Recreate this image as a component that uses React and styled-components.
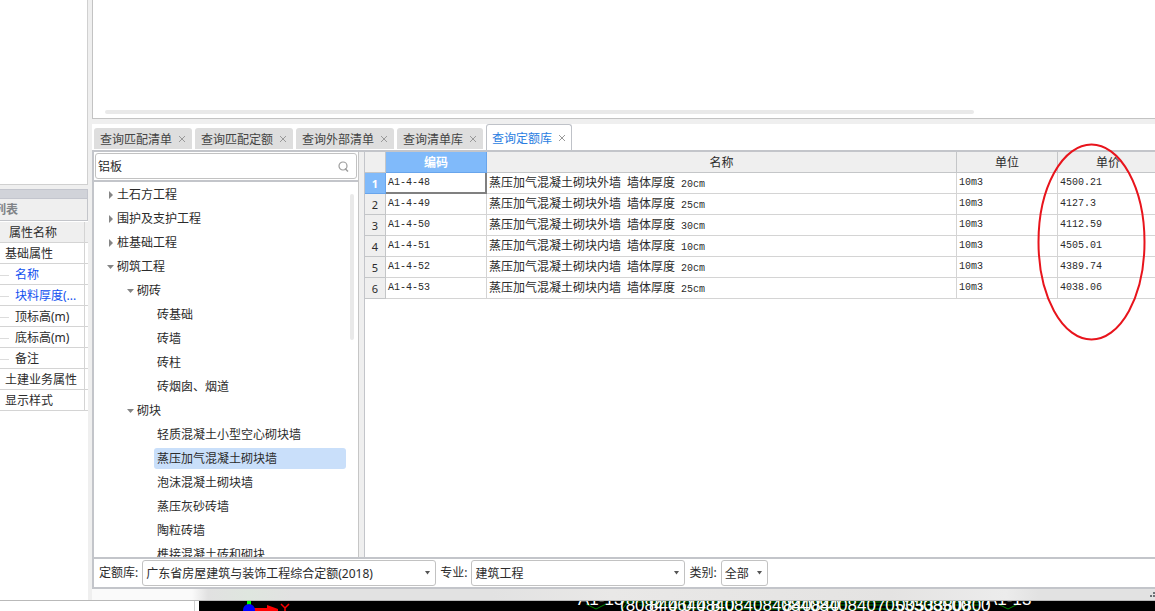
import { Fragment, useState } from "react";
import styled, { createGlobalStyle, css } from "styled-components";

const GlobalStyle = createGlobalStyle`
  * {
    box-sizing: border-box;
  }
  body {
    margin: 0;
    overflow: hidden;
    color: #2b2b2b;
    background: #fff;
    font-size: 12px;
  }
  body, button, input, select {
    font-family: "Noto Sans CJK SC", sans-serif;
  }
`;

const line = "#c3c5ca";
const softLine = "#d4d4d4";

const Page = styled.div`
  display: flex;
  flex-direction: column;
  height: 100vh;
`;

const Workspace = styled.div`
  display: flex;
  flex: 1;
  min-height: 0;
  background: #efefef;
  border-bottom: 1px solid #b9b9b9;
`;

/* left side */

const Sidebar = styled.aside`
  display: flex;
  flex-direction: column;
  width: 88px;
  margin-right: 4px;
`;

const ComponentPane = styled.div`
  height: 185px;
  margin-bottom: 4px;
  background: #fff;
  border-right: 1px solid #d0d0d0;
  border-bottom: 1px solid #d0d0d0;
`;

const PaneGrip = styled.div`
  height: 10px;
  background: #d1d3d9;
  border: 1px solid #c3c5cd;
  border-width: 1px 1px 1px 0;
`;

const PaneTitle = styled.h2`
  height: 22px;
  margin: 0;
  border-right: 1px solid ${line};
  border-bottom: 1px solid ${line};
  color: #808387;
  font-size: 12px;
  line-height: 20px;
  text-indent: -6px;
  white-space: nowrap;
`;

const PropertyPane = styled.div`
  flex: 1;
  padding-top: 1px;
  background: #fff;
`;

const PropertyTable = styled.table`
  width: 100%;
  table-layout: fixed;
  border-collapse: separate;
  border-spacing: 0;

  th,
  td {
    height: 21px;
    padding: 2px 0 0;
    border-bottom: 1px solid ${softLine};
    font-weight: normal;
    line-height: 18px;
    text-align: left;
    white-space: nowrap;
  }
  th {
    padding-top: 0;
    background: #efefef;
  }
  th:first-child,
  td:first-child {
    width: 85px;
    border-right: 1px solid ${softLine};
  }
  th:first-child {
    padding-left: 9px;
  }
`;

const PropertyName = styled.div`
  display: flex;
  align-items: center;
  gap: 6px;
  padding-left: ${(props) => (props.$child ? 0 : 5)}px;
  color: ${(props) => (props.$editable ? "#1150f0" : "inherit")};
  font-family: "Noto Sans", "Noto Sans CJK SC", sans-serif;

  ${(props) =>
    props.$child &&
    css`
      &::before {
        content: "";
        width: 9px;
        border-top: 1px solid #dcdcdc;
      }
    `}
`;

/* right side */

const Main = styled.main`
  display: flex;
  flex: 1;
  flex-direction: column;
  min-width: 0;
`;

const UpperPane = styled.div`
  display: flex;
  align-items: flex-end;
  height: 119px;
  margin-bottom: 5px;
  padding: 0 181px 4px 12px;
  background: #fff;
  border-left: 1px solid #c3c3c3;
  border-bottom: 1px solid #c3c3c3;
`;

const HorizontalThumb = styled.div`
  flex: 1;
  height: 4px;
  border-radius: 2px;
  background: #e9e9e9;
`;

const TabBar = styled.div`
  display: flex;
  align-items: flex-end;
  gap: 3px;
  height: 26px;
  padding-left: 2px;
  background: #fff;
`;

const Tab = styled.button`
  display: flex;
  align-items: center;
  gap: 7px;
  height: 21px;
  margin-bottom: 1px;
  padding: 0 7px 0 6px;
  border: 0;
  border-radius: 3px 3px 0 0;
  background: #dedede;
  color: #444;
  font-size: 12px;
  line-height: 20px;
  white-space: nowrap;

  svg {
    width: 6px;
    height: 6px;
    stroke: #999;
  }

  ${(props) =>
    props.$active &&
    css`
      height: 26px;
      margin-bottom: 0;
      padding: 0 6px 0 5px;
      border: 1px solid #bfc2c8;
      border-bottom: 0;
      background: #fff;
      color: #2a7de1;
    `}
`;

const Dock = styled.div`
  display: flex;
  flex: 1;
  flex-direction: column;
  min-height: 0;
  background: #fff;
  border-top: 2px solid ${line};
  border-left: 2px solid ${line};
  border-bottom: 2px solid ${line};
`;

const DockBody = styled.div`
  display: flex;
  flex: 1;
  gap: 5px;
  min-height: 0;
  background: #efefef;
`;

const TreePanel = styled.section`
  display: flex;
  flex-direction: column;
  width: 265px;
  background: #fff;
  border-right: 1px solid #c6c6c6;
`;

const SearchBox = styled.label`
  display: flex;
  align-items: center;
  height: 26px;
  margin: 1px;
  padding: 0 7px 0 2px;
  border: 1px solid #c2c2c2;
  border-radius: 3px;

  input {
    flex: 1;
    min-width: 0;
    padding: 0;
    border: 0;
    outline: 0;
    color: inherit;
    font-size: 12px;
    line-height: 20px;
  }
  svg {
    width: 11px;
    height: 11px;
    stroke: #9d9d9d;
  }
`;

const TreeScroll = styled.div`
  display: flex;
  flex: 1;
  min-height: 0;
  overflow: hidden;
  border-top: 2px solid ${line};
`;

const TreeList = styled.ul`
  flex: 1;
  margin: 0;
  padding: 0;
  list-style: none;
`;

const VerticalThumb = styled.div`
  width: 4px;
  height: 146px;
  margin: 12px 4px;
  border-radius: 2px;
  background: #e9e9e9;
`;

const TreeRow = styled.li`
  display: flex;
  align-items: center;
  height: 24px;
  padding-left: ${(props) => 11 + props.$level * 20}px;

  svg {
    flex: none;
    width: 9px;
    height: 9px;
    fill: #858585;
  }
`;

const TreeSpacer = styled.span`
  width: 9px;
`;

const TreeLabel = styled.button`
  flex: 1;
  height: 21px;
  padding: 0 0 0 3px;
  border: 0;
  border-radius: 3px;
  background: ${(props) => (props.$selected ? "#c9dffa" : "transparent")};
  color: inherit;
  font-size: 12px;
  line-height: 20px;
  text-align: left;
  white-space: nowrap;
`;

const GridPanel = styled.section`
  position: relative;
  flex: 1;
  min-width: 0;
  background: #fff;
  border-left: 1px solid ${line};
`;

const GridScroll = styled.div`
  height: 100%;
  overflow: hidden;
`;

const Grid = styled.table`
  width: 100%;
  min-width: 794px;
  table-layout: fixed;
  border-collapse: separate;
  border-spacing: 0;

  th,
  td {
    height: 21px;
    padding: 0;
    border-right: 1px solid ${softLine};
    border-bottom: 1px solid ${softLine};
    white-space: nowrap;
  }
  td {
    padding-left: 2px;
    font-family: "Liberation Mono", "Noto Sans CJK SC", monospace;
    font-size: 10px;
    line-height: 16px;
  }
`;

const HeadCell = styled.th`
  width: ${(props) => (props.$width ? `${props.$width}px` : "auto")};
  background: ${(props) => (props.$active ? "#80bafa" : "#efefef")};
  color: ${(props) => (props.$active ? "#fff" : "inherit")};
  font-weight: ${(props) => (props.$active ? "bold" : "normal")};
  line-height: 20px;

  ${Grid} & {
    border-color: ${(props) => (props.$active ? "#68a5ec" : "#c4c6c8")};
  }
`;

const RowHead = styled.th`
  background: ${(props) => (props.$active ? "#80bafa" : "#efefef")};
  color: ${(props) => (props.$active ? "#fff" : "inherit")};
  font-family: "Noto Sans", sans-serif;
  font-size: 11px;
  font-weight: ${(props) => (props.$active ? "bold" : "normal")};
  line-height: 18px;

  ${Grid} & {
    padding-top: 2px;
    border-color: ${(props) => (props.$active ? "#68a5ec" : "#c4c6c8")};
  }
`;

const CodeCell = styled.td`
  ${(props) =>
    props.$active &&
    css`
      box-shadow: inset -1px -1px 0 #808080;
      ${Grid} & {
        border-color: #808080;
      }
    `}
`;

const Hanzi = styled.span`
  font-family: "Noto Sans CJK SC", sans-serif;
  font-size: 12px;
`;

const PriceMark = styled.svg`
  position: absolute;
  top: -9px;
  right: 9px;
  width: 109px;
  height: 198px;
  fill: none;
  stroke: #e8141c;
  stroke-width: 2;
  pointer-events: none;
`;

const FilterBar = styled.form`
  display: flex;
  align-items: center;
  gap: 4px;
  height: 30px;
  padding-left: 5px;
  border-top: 2px solid ${line};
  font-family: "Noto Sans", "Noto Sans CJK SC", sans-serif;

  label {
    line-height: 20px;
    white-space: nowrap;
  }
`;

const SelectBox = styled.span`
  position: relative;
  display: flex;
  width: ${(props) => props.$width}px;

  select {
    width: 100%;
    height: 26px;
    padding: 0 16px 0 3px;
    border: 1px solid #c2c2c2;
    border-radius: 3px;
    appearance: none;
    background: #fff;
    color: inherit;
    font-family: "Noto Sans", "Noto Sans CJK SC", sans-serif;
    font-size: 12px;
  }
  svg {
    position: absolute;
    top: 11px;
    right: 6px;
    width: 5px;
    height: 4px;
    fill: #555;
    pointer-events: none;
  }
`;

const StatusBar = styled.footer`
  display: flex;
  align-items: flex-end;
  justify-content: flex-end;
  height: 11px;
  background: linear-gradient(
    to right,
    #fafafa 100px,
    #e1e1e1 116px,
    #dfe6df 157px,
    #e2e2e2 200px,
    #e2e2e2 400px,
    #e9e8e7 520px,
    #e4e3e2 75%,
    #ececec 86%,
    #e2e2e2 89%
  );

  svg {
    width: 5px;
    height: 9px;
    fill: #6d7276;
  }
`;

const ModelStrip = styled.div`
  display: flex;
  height: 10px;
`;

const ModelMargin = styled.div`
  width: 195px;
  margin-right: 4px;
  border-right: 1px solid #d0d0d0;
`;

const ModelView = styled.svg`
  flex: 1;
  height: 10px;
  background: #000;
  font-family: "Liberation Sans", sans-serif;
`;

const properties = [
  { name: "基础属性" },
  { name: "名称", child: true, editable: true },
  { name: "块料厚度(...", child: true, editable: true },
  { name: "顶标高(m)", child: true },
  { name: "底标高(m)", child: true },
  { name: "备注", child: true },
  { name: "土建业务属性" },
  { name: "显示样式" },
];

const tabs = ["查询匹配清单", "查询匹配定额", "查询外部清单", "查询清单库", "查询定额库"];

const tree = [
  { name: "土石方工程", level: 0, icon: "closed" },
  { name: "围护及支护工程", level: 0, icon: "closed" },
  { name: "桩基础工程", level: 0, icon: "closed" },
  { name: "砌筑工程", level: 0, icon: "open" },
  { name: "砌砖", level: 1, icon: "open" },
  { name: "砖基础", level: 2 },
  { name: "砖墙", level: 2 },
  { name: "砖柱", level: 2 },
  { name: "砖烟囱、烟道", level: 2 },
  { name: "砌块", level: 1, icon: "open" },
  { name: "轻质混凝土小型空心砌块墙", level: 2 },
  { name: "蒸压加气混凝土砌块墙", level: 2 },
  { name: "泡沫混凝土砌块墙", level: 2 },
  { name: "蒸压灰砂砖墙", level: 2 },
  { name: "陶粒砖墙", level: 2 },
  { name: "榫接混凝土砖和砌块", level: 2 },
];

const quotas = [
  { code: "A1-4-48", wall: "外墙", thickness: "20cm", price: "4500.21" },
  { code: "A1-4-49", wall: "外墙", thickness: "25cm", price: "4127.3" },
  { code: "A1-4-50", wall: "外墙", thickness: "30cm", price: "4112.59" },
  { code: "A1-4-51", wall: "内墙", thickness: "10cm", price: "4505.01" },
  { code: "A1-4-52", wall: "内墙", thickness: "20cm", price: "4389.74" },
  { code: "A1-4-53", wall: "内墙", thickness: "25cm", price: "4038.06" },
];

const filters = [
  { id: "library", label: "定额库:", value: "广东省房屋建筑与装饰工程综合定额(2018)", width: 294 },
  { id: "major", label: "专业:", value: "建筑工程", width: 214 },
  { id: "kind", label: "类别:", value: "全部", width: 47 },
];

function TreeArrow({ icon }) {
  return (
    <svg viewBox="0 0 9 9">
      {icon === "open" ? <path d="M2 3h7L5.5 7z" /> : <path d="M4 1l4 4-4 4z" />}
    </svg>
  );
}

function PropertyList() {
  return (
    <Sidebar>
      <ComponentPane />
      <PaneGrip />
      <PaneTitle>列表</PaneTitle>
      <PropertyPane>
        <PropertyTable>
          <thead>
            <tr>
              <th>属性名称</th>
              <th />
            </tr>
          </thead>
          <tbody>
            {properties.map((item) => (
              <tr key={item.name}>
                <td>
                  <PropertyName $child={item.child} $editable={item.editable}>
                    {item.name}
                  </PropertyName>
                </td>
                <td />
              </tr>
            ))}
          </tbody>
        </PropertyTable>
      </PropertyPane>
    </Sidebar>
  );
}

function QuotaTree() {
  const [keyword, setKeyword] = useState("铝板");
  const [selected, setSelected] = useState("蒸压加气混凝土砌块墙");

  return (
    <TreePanel>
      <SearchBox>
        <input
          aria-label="搜索"
          value={keyword}
          onChange={(e) => setKeyword(e.target.value)}
        />
        <svg viewBox="0 0 11 11" fill="none">
          <circle cx="5" cy="5" r="4" strokeWidth="1.2" />
          <path d="M7 7.5L10 10.5" strokeWidth="1.5" />
        </svg>
      </SearchBox>
      <TreeScroll>
        <TreeList>
          {tree.map((node) => (
            <TreeRow key={node.name} $level={node.level}>
              {node.icon ? <TreeArrow icon={node.icon} /> : <TreeSpacer />}
              <TreeLabel
                type="button"
                $selected={node.name === selected}
                onClick={() => setSelected(node.name)}
              >
                {node.name}
              </TreeLabel>
            </TreeRow>
          ))}
        </TreeList>
        <VerticalThumb />
      </TreeScroll>
    </TreePanel>
  );
}

function QuotaGrid() {
  return (
    <GridPanel>
      <GridScroll>
        <Grid>
          <thead>
            <tr>
              <HeadCell $width={21} />
              <HeadCell $width={101} $active>
                编码
              </HeadCell>
              <HeadCell>名称</HeadCell>
              <HeadCell $width={101}>单位</HeadCell>
              <HeadCell $width={101}>单价</HeadCell>
            </tr>
          </thead>
          <tbody>
            {quotas.map((item, index) => (
              <tr key={item.code}>
                <RowHead $active={index === 0}>{index + 1}</RowHead>
                <CodeCell $active={index === 0}>{item.code}</CodeCell>
                <td>
                  <Hanzi>蒸压加气混凝土砌块{item.wall}</Hanzi> <Hanzi>墙体厚度</Hanzi>{" "}
                  {item.thickness}
                </td>
                <td>10m3</td>
                <td>{item.price}</td>
              </tr>
            ))}
          </tbody>
        </Grid>
      </GridScroll>
      <PriceMark viewBox="0 0 109 198">
        <ellipse cx="54.5" cy="99" rx="53" ry="97.5" />
      </PriceMark>
    </GridPanel>
  );
}

function Filters() {
  return (
    <FilterBar>
      {filters.map((item) => (
        <Fragment key={item.id}>
          <label htmlFor={item.id}>{item.label}</label>
          <SelectBox $width={item.width}>
            <select id={item.id} defaultValue={item.value}>
              <option>{item.value}</option>
            </select>
            <svg viewBox="0 0 5 4">
              <path d="M0 0h5L2.5 3.5z" />
            </svg>
          </SelectBox>
        </Fragment>
      ))}
    </FilterBar>
  );
}

function Model() {
  return (
    <ModelStrip>
      <ModelMargin />
      <ModelView>
        <path d="M48 0h4v6h-4z" fill="#0f0" />
        <path d="M54 7h14V4l11 4v3H54z" fill="#f00" />
        <circle cx="50" cy="9" r="6" fill="#00f" />
        <path d="M82 3l4 4 4-4M86 7v4" fill="none" stroke="#f00" strokeWidth="1.5" />
        <path
          d="M387 3l10 5 10-5M799 3l10 5 10-5M424 1h360M422 10l6-8M440 4h340M470 8h310"
          fill="none"
          stroke="#080"
        />
        <g fill="#fff" fontSize="17">
          <text x="379" y="4">A1-13</text>
          <text x="787" y="4">A1-13</text>
          <text x="421" y="10">(808</text>
          <text x="450" y="10">8406408408408408408408407053308500</text>
          <text x="455" y="10">4 4 0 4 8 0</text>
          <text x="584" y="10">840840</text>
          <text x="697" y="10">0053380800</text>
        </g>
      </ModelView>
    </ModelStrip>
  );
}

export default function App() {
  const [active, setActive] = useState("查询定额库");

  return (
    <Page>
      <GlobalStyle />
      <Workspace>
        <PropertyList />
        <Main>
          <UpperPane>
            <HorizontalThumb />
          </UpperPane>
          <TabBar>
            {tabs.map((name) => (
              <Tab key={name} $active={name === active} onClick={() => setActive(name)}>
                {name}
                <svg viewBox="0 0 6 6">
                  <path d="M0 0l6 6M6 0L0 6" />
                </svg>
              </Tab>
            ))}
          </TabBar>
          <Dock>
            <DockBody>
              <QuotaTree />
              <QuotaGrid />
            </DockBody>
            <Filters />
          </Dock>
          <StatusBar>
            <svg viewBox="0 0 5 9">
              <path d="M0 4h2v2H0zM3 4h2v2H3zM3 1h2v2H3z" />
            </svg>
          </StatusBar>
        </Main>
      </Workspace>
      <Model />
    </Page>
  );
}
